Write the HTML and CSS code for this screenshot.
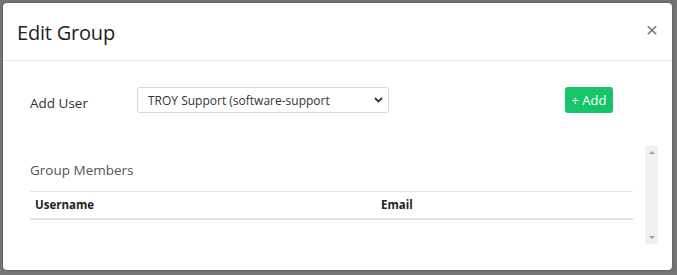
FILE: index.html
```html
<!DOCTYPE html>
<html lang="en">
<head>
    <meta charset="UTF-8">
    <meta name="viewport" content="width=device-width, initial-scale=1.0">
    <title>Edit Group</title>
    <link rel="stylesheet" href="styles.css">
</head>
<body>
    <div class="modal">
        <div class="modal-header">
            <h2 class="modal-title">Edit Group</h2>
            <button class="close" type="button">&times;</button>
        </div>

        <div class="modal-body">
            <div class="add-row">
                <label class="add-label" for="user">Add User</label>
                <div class="select-wrap">
                    <select id="user" class="user-select">
                        <option>TROY Support (software-support</option>
                    </select>
                    <svg class="chevron" width="9" height="6" viewBox="0 0 9 6">
                        <path d="M1 1l3.5 3.5L8 1" fill="none" stroke="#333" stroke-width="1.8"/>
                    </svg>
                </div>
                <button class="btn-add" type="button">+ Add</button>
            </div>

            <div class="members">
                <div class="members-content">
                    <h4 class="members-title">Group Members</h4>
                    <table class="members-table">
                        <thead>
                            <tr>
                                <th class="col-user">Username</th>
                                <th>Email</th>
                            </tr>
                        </thead>
                    </table>
                </div>
                <div class="scrollbar">
                    <span class="arrow up"></span>
                    <span class="arrow down"></span>
                </div>
            </div>
        </div>
    </div>
</body>
</html>
```

FILE: styles.css
```css
body {
    margin: 0;
    padding: 3px;
    background-color: #747474;
    font-family: "Open Sans", Arial, sans-serif;
    color: #333;
}
.modal {
    width: 669px;
    height: 267px;
    background-color: #fff;
    border-radius: 4px;
    box-shadow: 0 0 2px rgba(0,0,0,0.4);
    box-sizing: border-box;
}
.modal-header {
    height: 58px;
    box-sizing: border-box;
    display: flex;
    align-items: center;
    justify-content: space-between;
    padding: 2px 14px 0 14px;
    border-bottom: 1px solid #e9ecef;
}
.modal-title {
    margin: 0;
    font-size: 20px;
    font-weight: 400;
    color: #222;
    letter-spacing: -0.2px;
}
.close {
    border: none;
    background: none;
    padding: 0;
    margin-top: -6px;
    font-family: Arial, sans-serif;
    font-size: 21px;
    line-height: 1;
    color: #7a7a7a;
}
.modal-body {
    padding: 26px 14px 0 27px;
}
.add-row {
    display: flex;
    align-items: center;
    height: 26px;
    margin-right: 45px;
}
.add-label {
    width: 107px;
    font-size: 13.5px;
    color: #333;
    padding-top: 5px;
}
.select-wrap {
    position: relative;
    width: 252px;
}
.user-select {
    width: 100%;
    height: 26px;
    padding: 0 0 0 10px;
    border: 1px solid #d6d6d6;
    border-radius: 3px;
    background: #fff;
    font-family: "Open Sans", Arial, sans-serif;
    font-size: 12px;
    color: #333;
    appearance: none;
    -webkit-appearance: none;
}
.chevron {
    position: absolute;
    right: 6px;
    top: 10px;
}
.btn-add {
    margin-left: auto;
    height: 26px;
    width: 48px;
    padding: 0;
    border: none;
    border-radius: 3px;
    background-color: #17c46a;
    color: #fff;
    font-family: "Open Sans", Arial, sans-serif;
    font-size: 13px;
}
.members {
    display: flex;
    margin-top: 33px;
}
.members-content {
    flex: 1;
    padding: 15px 12px 0 0;
}
.members-title {
    margin: 0 0 12px 0;
    font-size: 13.5px;
    font-weight: 400;
    color: #555;
}
.members-table {
    width: 100%;
    border-collapse: collapse;
}
.members-table th {
    text-align: left;
    font-size: 11.5px;
    font-weight: 700;
    color: #222;
    padding: 5px 5px 6px 5px;
    border-top: 1px solid #e3e6e9;
    border-bottom: 2px solid #dee2e6;
}
.col-user {
    width: 336px;
}
.scrollbar {
    width: 13px;
    height: 98px;
    background-color: #f1f1f1;
    display: flex;
    flex-direction: column;
    justify-content: space-between;
    align-items: center;
    padding: 5px 0;
    box-sizing: border-box;
}
.arrow {
    width: 0;
    height: 0;
    border-left: 3px solid transparent;
    border-right: 3px solid transparent;
}
.arrow.up {
    border-bottom: 3px solid #a3a3a3;
}
.arrow.down {
    border-top: 3px solid #a3a3a3;
}
```
